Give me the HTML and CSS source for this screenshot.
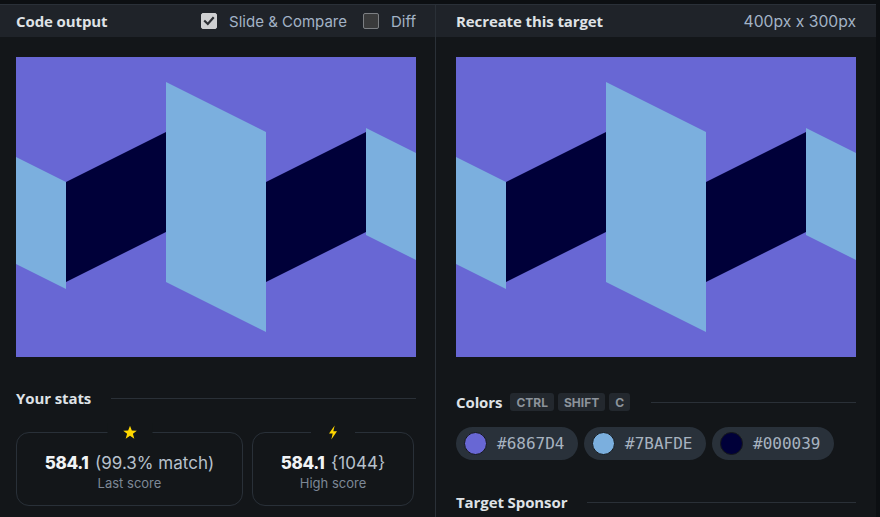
FILE: index.html
```html
<!DOCTYPE html>
<html>
<head>
<meta charset="utf-8">
<link rel="stylesheet" href="styles.css">
</head>
<body>
<div class="app">
  <section class="panel left">
    <header class="bar">
      <h2 class="title">Code output</h2>
      <div class="opts">
        <label class="opt"><span class="cb checked"><svg viewBox="0 0 16 16" width="16" height="16"><path d="M4 8.3 L6.8 11 L12 5" fill="none" stroke="#2b2e33" stroke-width="2.2" stroke-linecap="square"/></svg></span>Slide &amp; Compare</label>
        <label class="opt"><span class="cb"></span>Diff</label>
      </div>
    </header>
    <div class="body">
      <div class="canvas">
        <svg viewBox="0 0 400 300" width="400" height="300">
          <rect width="400" height="300" fill="#6867D4"/>
          <polygon points="50,125 150,75 150,175 50,225" fill="#000039"/>
          <polygon points="250,125 350,75 350,175 250,225" fill="#000039"/>
          <polygon points="0,100 50,125 50,232 0,207" fill="#7BAFDE"/>
          <polygon points="150,25 250,75 250,275 150,225" fill="#7BAFDE"/>
          <polygon points="350,71 400,96 400,203 350,178" fill="#7BAFDE"/>
        </svg>
      </div>
      <div class="section-head stats-head"><h3>Your stats</h3><span class="rule"></span></div>
      <div class="cards">
        <div class="card wide">
          <span class="badge"><svg viewBox="0 0 24 24" width="17" height="17"><path d="M12 2.5 L14.6 9.2 L21.6 9.4 L16.1 13.8 L18.1 20.8 L12 16.7 L5.9 20.8 L7.9 13.8 L2.4 9.4 L9.4 9.2 Z" fill="#FFD700"/></svg></span>
          <div class="score"><b>584.1</b> <span>(99.3% match)</span></div>
          <div class="label">Last score</div>
        </div>
        <div class="card narrow">
          <span class="badge"><svg viewBox="0 0 24 24" width="16" height="17"><path d="M14.5 1.5 L6 13.5 L11.5 13.5 L9.5 22.5 L18 10 L12.5 10 Z" fill="#FFD700"/></svg></span>
          <div class="score"><b>584.1</b> <span>{1044}</span></div>
          <div class="label">High score</div>
        </div>
      </div>
    </div>
  </section>
  <section class="panel right">
    <header class="bar">
      <h2 class="title">Recreate this target</h2>
      <span class="dims">400px x 300px</span>
    </header>
    <div class="body">
      <div class="canvas">
        <svg viewBox="0 0 400 300" width="400" height="300">
          <rect width="400" height="300" fill="#6867D4"/>
          <polygon points="50,125 150,75 150,175 50,225" fill="#000039"/>
          <polygon points="250,125 350,75 350,175 250,225" fill="#000039"/>
          <polygon points="0,100 50,125 50,232 0,207" fill="#7BAFDE"/>
          <polygon points="150,25 250,75 250,275 150,225" fill="#7BAFDE"/>
          <polygon points="350,71 400,96 400,203 350,178" fill="#7BAFDE"/>
        </svg>
      </div>
      <div class="section-head colors-head"><h3>Colors</h3><kbd>CTRL</kbd><kbd>SHIFT</kbd><kbd>C</kbd><span class="rule"></span></div>
      <div class="chips">
        <div class="chip"><span class="dot dot1"></span>#6867D4</div>
        <div class="chip"><span class="dot dot2"></span>#7BAFDE</div>
        <div class="chip"><span class="dot dot3"></span>#000039</div>
      </div>
      <div class="section-head sponsor-head"><h3>Target Sponsor</h3><span class="rule"></span></div>
    </div>
  </section>
</div>
</body>
</html>
```
FILE: styles.css
```css
* { box-sizing: border-box; }
html, body { margin: 0; padding: 0; }
body {
  width: 880px;
  height: 517px;
  overflow: hidden;
  background: #0c0f12;
  font-family: Inter, "Noto Sans", sans-serif;
  color: #e2e5e9;
}
.app {
  margin-top: 4px;
  width: 876px;
  height: 513px;
  display: grid;
  grid-template-columns: 436px 440px;
  background: #131619;
}
.panel { display: flex; flex-direction: column; }
.left { border-right: 1px solid #2a3037; }
.bar {
  height: 33px;
  background: #1f2329;
  border-top: 1px solid #2a3038;
  display: flex;
  align-items: center;
  justify-content: space-between;
}
.left .bar { padding: 0 19px 0 16px; }
.right .bar { padding: 0 20px 0 20px; }
.title, .section-head h3 {
  margin: 0;
  font-family: "Open Sans", Inter, sans-serif;
  font-size: 15px;
  font-weight: 700;
  color: #dfe2e6;
  white-space: nowrap;
  letter-spacing: -0.1px;
}
.opts { display: flex; align-items: center; gap: 16px; }
.opt {
  display: flex;
  align-items: center;
  gap: 12px;
  font-size: 15px;
  color: #a3b3c6;
}
.cb {
  width: 16px;
  height: 16px;
  border-radius: 2px;
  background: #3a3b3c;
  border: 1px solid #7c7f83;
  display: flex;
  align-items: center;
  justify-content: center;
}
.cb.checked { background: #cfd0d2; border-color: #cfd0d2; }
.cb.checked svg { display: block; margin: -1px; }
.dims { font-size: 15.7px; color: #a3b3c6; }
.left .body { padding: 20px 19px 0 16px; }
.right .body { padding: 20px 20px 0 20px; }
.canvas { width: 400px; height: 300px; }
.canvas svg { display: block; }
.section-head {
  display: flex;
  align-items: center;
  height: 20px;
}
.rule { flex: 1; height: 1px; background: #2a3037; }
.stats-head { margin-top: 31px; }
.stats-head .rule { margin-left: 20px; }
.cards { display: flex; gap: 9px; margin-top: 24px; }
.card {
  position: relative;
  height: 74px;
  border: 1.5px solid #293038;
  border-radius: 13px;
  display: flex;
  flex-direction: column;
  align-items: center;
  justify-content: center;
}
.card.wide { width: 227px; }
.card.narrow { width: 162px; }
.badge {
  position: absolute;
  top: -10px;
  left: 50%;
  transform: translateX(-50%);
  background: #131619;
  padding: 0 14px;
  height: 18px;
  display: flex;
  align-items: center;
}
.badge svg { display: block; }
.score { font-size: 17px; color: #b7c1cc; margin-top: 5px; }
.score b { color: #f1f3f5; font-weight: 800; letter-spacing: -0.4px; margin-right: 2px; }
.label { font-size: 13px; color: #7d8896; margin-top: 2px; }
.colors-head { margin-top: 35px; }
kbd {
  font-family: Inter, sans-serif;
  font-size: 12px;
  font-weight: 700;
  color: #8c939b;
  background: #23282e;
  border-radius: 3px;
  height: 18px;
  padding: 0 6px;
  display: flex;
  align-items: center;
  margin-left: 4px;
}
.colors-head h3 { margin-right: 4px; }
.colors-head .rule { margin-left: 21px; }
.chips { display: flex; gap: 6px; margin-top: 15px; }
.chip {
  width: 122px;
  height: 33px;
  border-radius: 17px;
  background: #29313a;
  display: flex;
  align-items: center;
  padding-left: 8px;
  gap: 10px;
  font-family: "DejaVu Sans Mono", monospace;
  font-size: 16px;
  color: #a7b3c0;
}
.dot {
  width: 23px;
  height: 23px;
  border-radius: 50%;
  border: 1.5px solid #15181b;
}
.dot1 { background: #6867D4; }
.dot2 { background: #7BAFDE; }
.dot3 { background: #000039; }
.sponsor-head { margin-top: 32px; }
.sponsor-head .rule { margin-left: 20px; }
```
